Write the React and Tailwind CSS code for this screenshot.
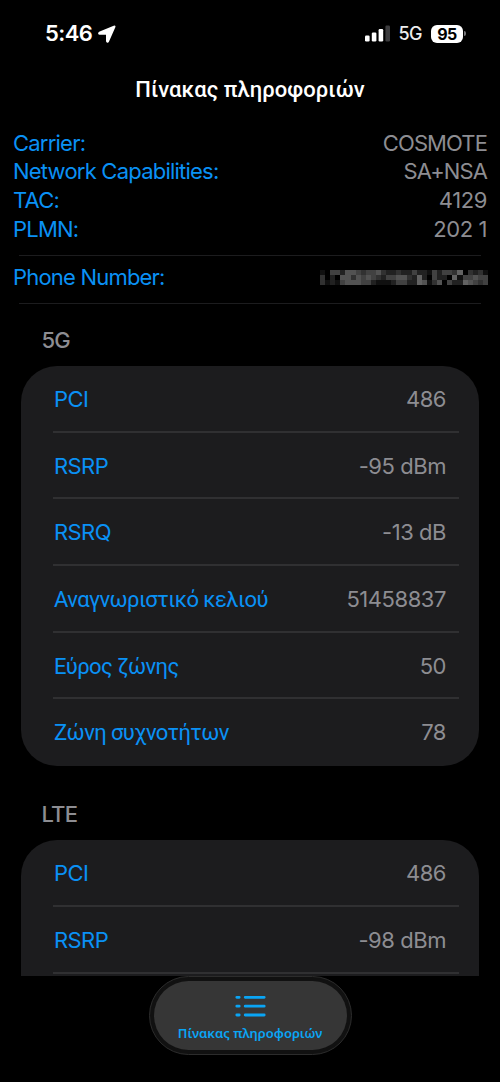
import React from "react";

const info = [
  { label: "Carrier:", value: "COSMOTE" },
  { label: "Network Capabilities:", value: "SA+NSA" },
  { label: "TAC:", value: "4129", numeric: true },
  { label: "PLMN:", value: "202 1", numeric: true },
];

const nr = [
  { label: "PCI", value: "486" },
  { label: "RSRP", value: "-95 dBm" },
  { label: "RSRQ", value: "-13 dB" },
  { label: "Αναγνωριστικό κελιού", value: "51458837", greek: true },
  { label: "Εύρος ζώνης", value: "50", greek: true },
  { label: "Ζώνη συχνοτήτων", value: "78", greek: true },
];

const lte = [
  { label: "PCI", value: "486" },
  { label: "RSRP", value: "-98 dBm" },
];

// brightness of each cell, one digit per cell
const maskRows = [
  "104425543445322322422142443603231",
  "302055354543244553262042206144544",
  "312145554421112442265135042265434",
];

function MaskedNumber() {
  return (
    <svg width="168" height="15" viewBox="0 0 33 3" preserveAspectRatio="none" shapeRendering="crispEdges">
      {maskRows.map((row, y) =>
        row.split("").map((c, x) => (
          <rect key={`${x}-${y}`} x={x} y={y} width="1" height="1" fill="#fff" fillOpacity={Number(c) * 0.064} />
        ))
      )}
    </svg>
  );
}

function StatusBar() {
  return (
    <div className="flex h-[67px] items-center pl-[45px] pr-[34px] text-white">
      <span className="text-[22px] font-semibold tracking-[-0.6px]">5:46</span>
      <svg className="ml-1.5" width="18" height="18" viewBox="0 0 18 18" fill="#fff">
        <path
          d="M16 1.4 1.4 7.6c-.8.4-.6 1.4.3 1.4h6.8c.2 0 .3.1.3.3v6.8c0 .9 1 1.1 1.4.3L16.6 2c.2-.5-.1-.8-.6-.6Z"
          stroke="#fff"
          strokeWidth="1.6"
          strokeLinejoin="round"
        />
      </svg>
      <svg className="ml-auto" width="25" height="17" viewBox="0 0 25 17" fill="#fff">
        <rect x="0" y="10.5" width="4.6" height="6" rx="1.2" />
        <rect x="6.8" y="7.5" width="4.6" height="9" rx="1.2" />
        <rect x="13.6" y="4" width="4.6" height="12.5" rx="1.2" />
        <rect x="20.4" y="0.5" width="4.6" height="16" rx="1.2" fill="#3c3c3e" />
      </svg>
      <span className="ml-2 text-lg font-medium tracking-[-0.5px] text-[#ededed]">5G</span>
      <span className="ml-[9px] flex h-[18px] w-8 items-center justify-center rounded-md bg-white text-base font-bold leading-none tracking-[-0.5px] text-black">
        95
      </span>
      <span className="ml-px h-[5px] w-0.5 rounded-r-full bg-[#77777a]" />
    </div>
  );
}

function Row({ label, value, greek }) {
  return (
    <div className="ml-8 mr-5 flex h-[66.65px] items-center justify-between border-b-2 border-[#303032] pl-px pr-[13px] pt-0.5 text-[22px] last:border-transparent">
      <span
        className={
          greek
            ? "font-['Roboto',sans-serif] tracking-[-0.58px] text-[#0a91f5]"
            : "tracking-[-0.6px] text-[#0a91f5]"
        }
      >
        {label}
      </span>
      <span className="tracking-[-0.45px] text-[#8d8d92]">{value}</span>
    </div>
  );
}

function TabBar() {
  return (
    <div className="ml-[149px] flex h-[79px] w-[203px] rounded-full border border-[#2c2c2c] bg-[#111] p-1">
      <div className="flex flex-1 flex-col items-center rounded-full bg-[#363636] pr-px pt-[14px] text-[#0aa5f5]">
        <svg width="31" height="22" viewBox="0 0 31 22" stroke="currentColor" strokeWidth="2.8" strokeLinecap="round">
          <path d="M1.8 2.3h2.4M10.2 2.3h19M1.8 11.2h2.4M10.2 11.2h19M1.8 20h2.4M10.2 20h19" />
        </svg>
        <span className="mt-[7px] whitespace-nowrap font-['Noto_Sans',sans-serif] text-[13px] font-semibold leading-[18px]">
          Πίνακας πληροφοριών
        </span>
      </div>
    </div>
  );
}

export default function App() {
  return (
    <div className="flex h-[1082px] w-[500px] flex-col overflow-hidden bg-black font-['Inter',sans-serif]">
      <StatusBar />
      <h1 className="h-[62px] pt-[6px] text-center font-['Roboto',sans-serif] text-[22px] font-medium tracking-[0.05px] text-white">
        Πίνακας πληροφοριών
      </h1>
      <div className="px-[13px]">
        {info.map((item) => (
          <div key={item.label} className="flex h-[28.6px] items-center justify-between text-[22px]">
            <span className="tracking-[-0.78px] text-[#0a91f5]">{item.label}</span>
            <span className={item.numeric ? "tracking-[-0.4px] text-[#8d8d92]" : "tracking-[-0.9px] text-[#8d8d92]"}>
              {item.value}
            </span>
          </div>
        ))}
      </div>
      <div className="mx-[19px] mt-[11.4px] border-t border-[#1c1c1e]" />
      <div className="flex h-[47px] items-center justify-between pb-1 pl-[13px] pr-3 text-[22px]">
        <span className="tracking-[-0.8px] text-[#0a91f5]">Phone Number:</span>
        <MaskedNumber />
      </div>
      <div className="mx-[19px] border-t border-[#1c1c1e]" />
      <h2 className="h-[62px] pl-[41.5px] pt-5 text-[22px] font-medium tracking-[-0.8px] text-[#8d8d92]">5G</h2>
      <div className="mx-[21px] rounded-[36px] bg-[#1c1c1e] pt-[0.4px]">
        {nr.map((r) => (
          <Row key={r.label} {...r} />
        ))}
      </div>
      <h2 className="h-[74px] pl-[41.5px] pt-8 text-[22px] font-medium tracking-[-0.8px] text-[#8d8d92]">LTE</h2>
      <div className="mx-[21px] h-[135.9px] overflow-hidden rounded-t-[36px] bg-[#1c1c1e] pt-[0.4px]">
        {lte.map((r) => (
          <Row key={r.label} {...r} />
        ))}
        <div />
      </div>
      <TabBar />
    </div>
  );
}
